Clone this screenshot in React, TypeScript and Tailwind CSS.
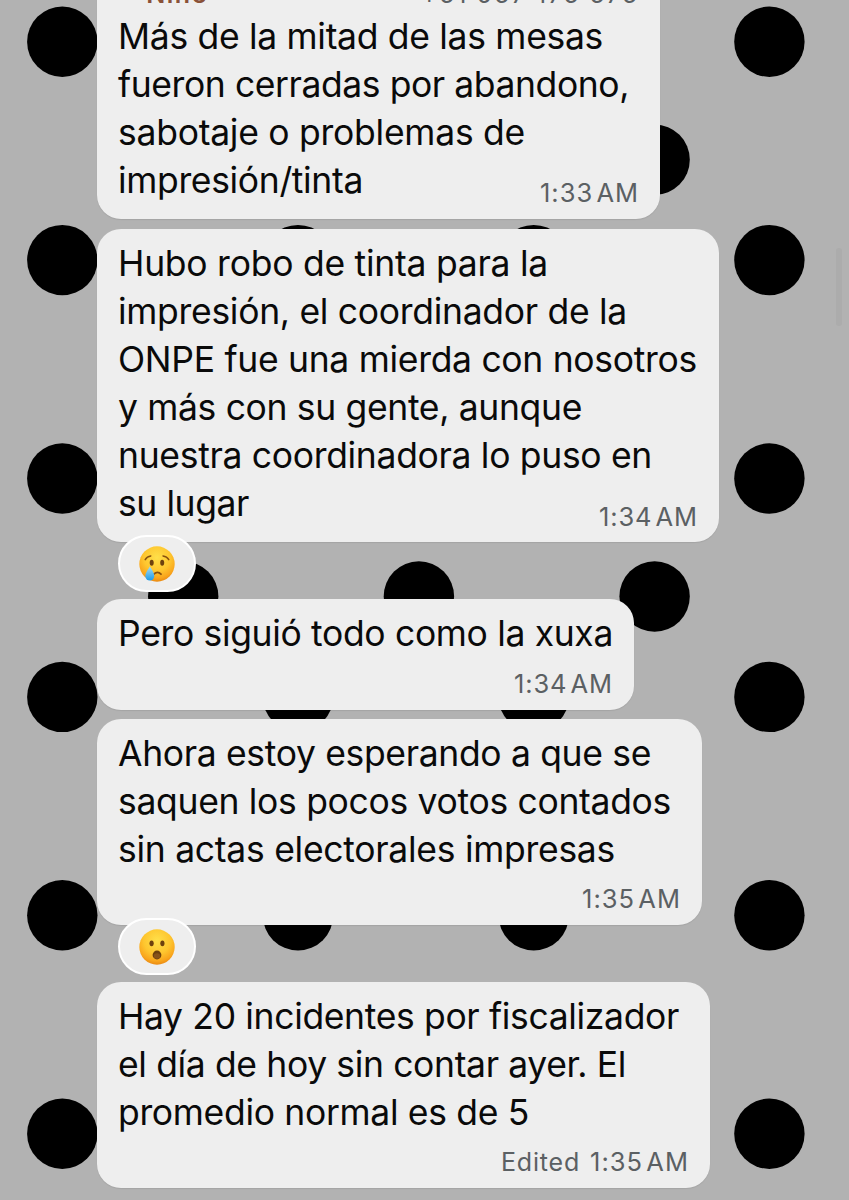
import { useRef, useLayoutEffect } from "react";

type Line = [text: string, width: number];

function FitLine({ text, width, className }: { text: string; width: number; className: string }) {
  const ref = useRef<HTMLSpanElement>(null);
  useLayoutEffect(() => {
    const el = ref.current;
    if (!el) return;
    el.style.letterSpacing = "0px";
    const natural = el.getBoundingClientRect().width;
    el.style.letterSpacing = `${(width - natural) / text.length}px`;
  }, [text, width]);
  return (
    <div className={className}>
      <span ref={ref}>{text}</span>
    </div>
  );
}

function Wallpaper() {
  const dots: [number, number][] = [];
  for (let row = 0; row < 6; row++) {
    for (let col = 0; col < 4; col++) {
      dots.push([62.3 + col * 235.7, 41.7 + row * 218.4]);
      dots.push([183.2 + col * 235.7, 159.7 + row * 218.4]);
    }
  }
  return (
    <svg className="absolute inset-0" width="849" height="1200" viewBox="0 0 849 1200" aria-hidden="true">
      {dots.map(([x, y], i) => (
        <circle key={i} cx={x} cy={y} r="35.2" fill="#000" />
      ))}
      <rect x="836" y="248" width="6" height="78" rx="3" fill="#acacac" />
    </svg>
  );
}

function Face({ kind }: { kind: "cry" | "wow" }) {
  return (
    <svg width="36" height="36" viewBox="0 0 36 36" aria-hidden="true">
      <defs>
        <radialGradient id={kind + "-skin"} cx="50%" cy="32%" r="68%">
          <stop offset="0" stopColor="#ffe04a" />
          <stop offset="0.55" stopColor="#fec62f" />
          <stop offset="0.85" stopColor="#f9a51c" />
          <stop offset="1" stopColor="#ea8a12" />
        </radialGradient>
        <linearGradient id={kind + "-tear"} x1="0" y1="0" x2="0" y2="1">
          <stop offset="0" stopColor="#a4dcf5" />
          <stop offset="1" stopColor="#1d9be8" />
        </linearGradient>
      </defs>
      <circle cx="18" cy="18" r="17.7" fill={`url(#${kind}-skin)`} />
      {kind === "cry" ? (
        <>
          <g fill="none" stroke="#87500f" strokeWidth="1.5" strokeLinecap="round">
            <path d="M6.2 13.6Q8 10.4 11.8 9.9" />
            <path d="M24 9.9Q27.9 10.4 29.8 13.6" />
            <path d="M14.8 28.2Q18.5 24.6 22 28.2" strokeWidth="1.8" />
          </g>
          <ellipse cx="12.7" cy="16.7" rx="2" ry="3" fill="#6d410e" />
          <ellipse cx="23.2" cy="16.7" rx="2" ry="3" fill="#6d410e" />
          <path d="M10.9 20.5Q15.300 27 15.300 30A4.500 4.500 0 0 1 6.300 30Q6.300 27 10.900 20.500Z" fill={`url(#${kind}-tear)`} />
        </>
      ) : (
        <>
          <ellipse cx="12.6" cy="14.3" rx="2.1" ry="2.9" fill="#6d410e" />
          <ellipse cx="23.4" cy="14.3" rx="2.1" ry="2.9" fill="#6d410e" />
          <circle cx="18" cy="26" r="4.4" fill="#6d410e" />
          <ellipse cx="18" cy="27" rx="3.200" ry="2.800" fill="#87531a" />
        </>
      )}
    </svg>
  );
}

function Reaction({ kind }: { kind: "cry" | "wow" }) {
  return (
    <div className="absolute left-[21px] top-full -mt-[7px] flex h-[57px] w-[78px] items-center justify-center rounded-full border-2 border-white bg-[#eeeeee]">
      <Face kind={kind} />
    </div>
  );
}

type BubbleProps = {
  className: string;
  lines: Line[];
  time: string;
  timeClass: string;
  edited?: boolean;
  reaction?: "cry" | "wow";
};

function Bubble({ className, lines, time, timeClass, edited, reaction }: BubbleProps) {
  return (
    <article className={`relative flex shrink-0 flex-col rounded-[24px] bg-[#eeeeee] px-[21px] shadow-[0_1px_1px_rgba(0,0,0,0.08)] ${className}`}>
      {lines.map(([text, width]) => (
        <FitLine key={text} text={text} width={width} className="h-[48px] text-[35.5px] leading-[48px] whitespace-nowrap text-[#0a0a0a]" />
      ))}
      <div className={`flex justify-end gap-[10px] text-[#5b6063] ${timeClass}`}>
        {edited && <FitLine text="Edited" width={79} className="text-[25px] leading-[32px] whitespace-nowrap" />}
        <FitLine text={time.replace(" ", "\u200A")} width={99} className="text-[25.5px] leading-[32px] whitespace-nowrap" />
      </div>
      {reaction && <Reaction kind={reaction} />}
    </article>
  );
}

export default function App() {
  return (
    <main className="relative h-[1200px] w-[849px] overflow-hidden bg-[#b2b2b2] font-['Inter','Liberation_Sans',sans-serif]">
      <Wallpaper />
      <div className="relative flex flex-col items-start pl-[97px]">
        <div className="relative flex w-[563px] flex-col">
          <Bubble
            className="-mt-[40px] h-[259px] w-[563px] pt-[53px]"
            time="1:33 AM"
            timeClass="-mt-[28px]"
            lines={[
              ["Más de la mitad de las mesas", 485],
              ["fueron cerradas por abandono,", 511],
              ["sabotaje o problemas de", 407],
              ["impresión/tinta", 245],
            ]}
          />
          <div className="absolute inset-x-[21px] -top-[21px] flex justify-between text-[25px] leading-[30px] whitespace-nowrap">
            <FitLine text="~ Nine" width={88} className="pl-[2px] font-semibold text-[#8a5138]" />
            <FitLine text="+51 957 175 575" width={218} className="text-[#5b6063]" />
          </div>
        </div>
        <Bubble
          className="mt-[10px] h-[313px] w-[622px] pt-[11px]"
          time="1:34 AM"
          timeClass="-mt-[27px]"
          reaction="cry"
          lines={[
            ["Hubo robo de tinta para la", 430],
            ["impresión, el coordinador de la", 509],
            ["ONPE fue una mierda con nosotros", 579],
            ["y más con su gente, aunque", 464],
            ["nuestra coordinadora lo puso en", 534],
            ["su lugar", 131],
          ]}
        />
        <Bubble
          className="mt-[57px] h-[111px] w-[537px] pt-[11px]"
          time="1:34 AM"
          timeClass="mt-[10px]"
          lines={[["Pero siguió todo como la xuxa", 495]]}
        />
        <Bubble
          className="mt-[9px] h-[206px] w-[605px] pt-[11px]"
          time="1:35 AM"
          timeClass="mt-[9px]"
          reaction="wow"
          lines={[
            ["Ahora estoy esperando a que se", 533],
            ["saquen los pocos votos contados", 553],
            ["sin actas electorales impresas", 497],
          ]}
        />
        <Bubble
          className="mt-[57px] h-[206px] w-[613px] pt-[11px]"
          time="1:35 AM"
          timeClass="mt-[9px]"
          edited
          lines={[
            ["Hay 20 incidentes por fiscalizador", 561],
            ["el día de hoy sin contar ayer. El", 508],
            ["promedio normal es de 5", 411],
          ]}
        />
      </div>
    </main>
  );
}
